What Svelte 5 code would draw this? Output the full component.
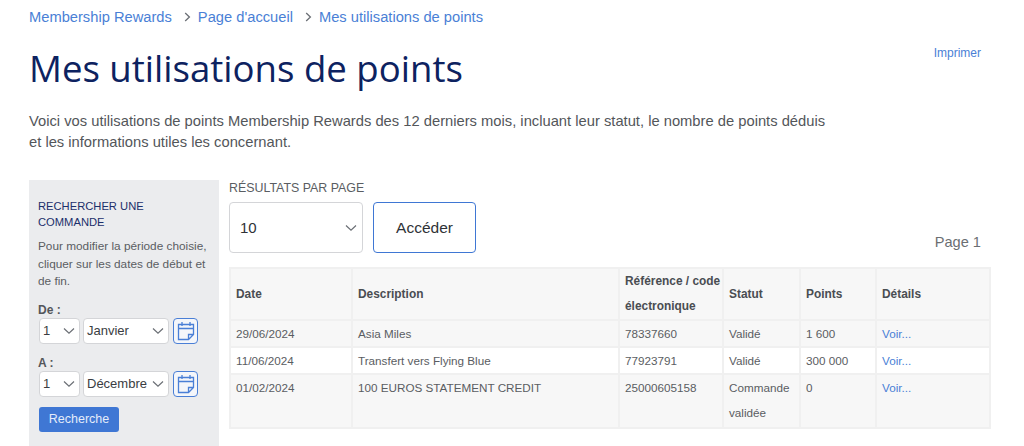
<script>
    const crumbs = ["Membership Rewards", "Page d'accueil", "Mes utilisations de points"];

    const rows = [
        { date: "29/06/2024", desc: "Asia Miles", ref: "78337660", statut: "Validé", points: "1 600" },
        { date: "11/06/2024", desc: "Transfert vers Flying Blue", ref: "77923791", statut: "Validé", points: "300 000" },
        { date: "01/02/2024", desc: "100 EUROS STATEMENT CREDIT", ref: "25000605158", statut: "Commande validée", points: "0" }
    ];

    const ranges = [
        { label: "De :", month: "Janvier" },
        { label: "A :", month: "Décembre" }
    ];
</script>

<div class="page">
    <nav class="crumbs">
        {#each crumbs as crumb, i}
            {#if i > 0}
                <svg class="sep" width="7" height="10" viewBox="0 0 7 10"><path d="M1.2 1 L5.4 5 L1.2 9" fill="none" stroke="#6b6f75" stroke-width="1.3" /></svg>
            {/if}
            <a href="#top">{crumb}</a>
        {/each}
    </nav>

    <div class="title-row">
        <h1>Mes utilisations de points</h1>
        <a class="print" href="#top">Imprimer</a>
    </div>

    <p class="intro">
        Voici vos utilisations de points Membership Rewards des 12 derniers mois, incluant leur statut, le nombre de points déduis<br />
        et les informations utiles les concernant.
    </p>

    <div class="content">
        <aside class="search">
            <h2>RECHERCHER UNE COMMANDE</h2>
            <p>Pour modifier la période choisie, cliquer sur les dates de début et de fin.</p>

            {#each ranges as range}
                <div class="range">
                    <div class="range-label">{range.label}</div>
                    <div class="range-row">
                        <div class="pick day">
                            <span>1</span>
                            <svg width="14" height="8" viewBox="0 0 14 8"><path d="M2 1.5 L7 6.2 L12 1.5" fill="none" stroke="#6b6f75" stroke-width="1.2" /></svg>
                        </div>
                        <div class="pick month">
                            <span>{range.month}</span>
                            <svg width="14" height="8" viewBox="0 0 14 8"><path d="M2 1.5 L7 6.2 L12 1.5" fill="none" stroke="#6b6f75" stroke-width="1.2" /></svg>
                        </div>
                        <button class="cal" aria-label="Calendrier">
                            <svg width="18" height="20" viewBox="0 0 18 20">
                                <path d="M1.5 3.5 H16.5 V13.5 L11.5 18.5 H1.5 Z M1.5 7.5 H16.5 M5 1 V5 M13 1 V5 M16.5 13.5 H11.5 V18.5" fill="none" stroke="#4a7fd6" stroke-width="1.3" />
                            </svg>
                        </button>
                    </div>
                </div>
            {/each}

            <button class="go">Recherche</button>
        </aside>

        <main class="results">
            <div class="per-page-label">RÉSULTATS PAR PAGE</div>
            <div class="toolbar">
                <div class="pick per-page">
                    <span>10</span>
                    <svg width="14" height="8" viewBox="0 0 14 8"><path d="M2 1.5 L7 6.2 L12 1.5" fill="none" stroke="#6b6f75" stroke-width="1.2" /></svg>
                </div>
                <button class="access">Accéder</button>
                <div class="page-num">Page 1</div>
            </div>

            <table>
                <colgroup>
                    <col style="width: 122px" />
                    <col style="width: 267px" />
                    <col style="width: 104px" />
                    <col style="width: 77px" />
                    <col style="width: 76px" />
                    <col style="width: 114px" />
                </colgroup>
                <thead>
                    <tr>
                        <th>Date</th>
                        <th>Description</th>
                        <th>Référence / code électronique</th>
                        <th>Statut</th>
                        <th>Points</th>
                        <th>Détails</th>
                    </tr>
                </thead>
                <tbody>
                    {#each rows as row}
                        <tr>
                            <td>{row.date}</td>
                            <td>{row.desc}</td>
                            <td>{row.ref}</td>
                            <td>{row.statut}</td>
                            <td>{row.points}</td>
                            <td><a href="#top">Voir...</a></td>
                        </tr>
                    {/each}
                </tbody>
            </table>
        </main>
    </div>
</div>

<style>
    :global(body) {
        margin: 0;
        background: #fff;
        font-family: "Liberation Sans", Arial, sans-serif;
        color: #53565a;
    }

    .page {
        padding: 8px 33px 0 29px;
        height: 438px;
        overflow: hidden;
    }

    a {
        color: #4a7fd6;
        text-decoration: none;
    }

    .crumbs {
        display: flex;
        align-items: center;
        height: 17px;
        font-size: 14.7px;
    }
    .sep { margin: 0 7px 0 12px; }

    .title-row {
        display: flex;
        justify-content: space-between;
        align-items: flex-start;
        margin-top: 18px;
    }

    h1 {
        margin: 0;
        font-family: "Open Sans", sans-serif;
        font-weight: 400;
        font-size: 36.6px;
        line-height: 50px;
        color: #0d2260;
    }

    .print {
        font-size: 12px;
        line-height: 14px;
        margin-top: 3px;
        margin-right: 10px;
    }

    .intro {
        margin: 18px 0 0;
        font-size: 14.74px;
        line-height: 21px;
        color: #53565a;
    }

    .content {
        display: flex;
        gap: 10px;
        margin-top: 27px;
    }

    .search {
        width: 190px;
        height: 266px;
        box-sizing: border-box;
        flex: none;
        background: #ebecee;
        padding: 18px 9px 0;
    }

    .search h2 {
        margin: 0;
        font-size: 11.2px;
        font-weight: 400;
        line-height: 16px;
        color: #1c2f6b;
    }

    .search p {
        margin: 8px 0 0;
        font-size: 11.8px;
        line-height: 17.5px;
        color: #5a5d62;
    }

    .range { margin-top: 12px; }
    .range + .range { margin-top: 12px; }

    .range-label {
        font-size: 12px;
        font-weight: 700;
        line-height: 14px;
        color: #53565a;
    }

    .range-row {
        display: flex;
        align-items: center;
        gap: 3px;
        margin: 1px 0 0 1px;
    }

    .pick {
        display: flex;
        align-items: center;
        justify-content: space-between;
        box-sizing: border-box;
        background: #fff;
        border: 1px solid #d4d5d8;
        border-radius: 4px;
        color: #3a3d42;
    }

    .day, .month {
        height: 26px;
        font-size: 13px;
        padding: 0 3px;
    }
    .day { width: 41px; }
    .month { width: 86px; }

    .cal {
        display: flex;
        align-items: center;
        justify-content: center;
        box-sizing: border-box;
        width: 25px;
        height: 26px;
        margin-left: 1px;
        padding: 0;
        background: #f4f6fa;
        border: 1px solid #4a7fd6;
        border-radius: 4px;
    }

    .go {
        display: block;
        width: 80px;
        height: 25px;
        margin: 10px 0 0 1px;
        padding: 0;
        background: #3f77d4;
        border: none;
        border-radius: 3px;
        color: #e4ecfa;
        font-family: inherit;
        font-size: 12.5px;
    }

    .results {
        flex: 1;
        min-width: 0;
    }

    .per-page-label {
        font-size: 12.4px;
        line-height: 16px;
        color: #5a5d62;
    }

    .toolbar {
        display: flex;
        margin-top: 6px;
    }

    .per-page {
        width: 134px;
        height: 51px;
        padding: 0 4px 0 10px;
        font-size: 15px;
        color: #2f3237;
    }

    .access {
        width: 103px;
        height: 51px;
        margin-left: 10px;
        padding: 0;
        background: #fff;
        border: 1px solid #3f77d4;
        border-radius: 4px;
        font-family: inherit;
        font-size: 15.5px;
        color: #2f3237;
    }

    .page-num {
        margin-left: auto;
        margin-right: 10px;
        align-self: flex-end;
        font-size: 14.6px;
        line-height: 16px;
        color: #6b6e72;
        padding-bottom: 3px;
    }

    table {
        width: 760px;
        table-layout: fixed;
        border-collapse: collapse;
        margin-top: 14px;
        font-size: 11.7px;
    }

    th, td {
        border: 2px solid #f0f0f0;
        text-align: left;
        padding: 0 0 0 5px;
        line-height: 25px;
        color: #5a5d62;
    }

    th {
        font-weight: 700;
        font-size: 11.9px;
        color: #4a4d52;
        background: #f7f7f7;
    }

    td { vertical-align: top; }
    td a { color: #4a7fd6; }

    tbody tr:nth-child(odd) td { background: #f7f7f7; }
    tbody tr:nth-child(even) td { background: #fff; }
    tbody tr:last-child td { padding-bottom: 2px; }
</style>
